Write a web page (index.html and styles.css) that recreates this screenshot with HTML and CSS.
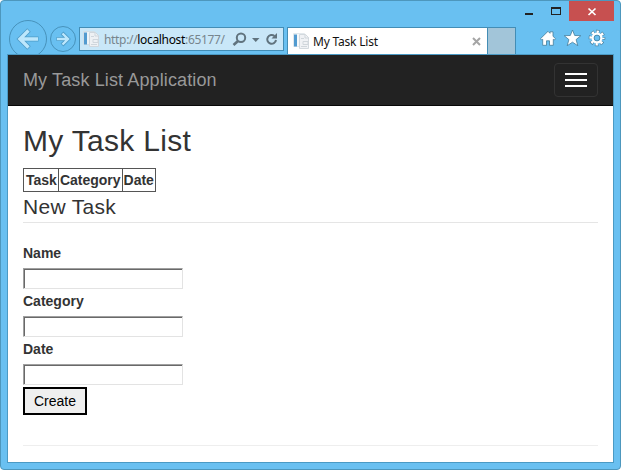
FILE: index.html
```html
<!DOCTYPE html>
<html lang="en">
<head>
<meta charset="utf-8">
<title>My Task List</title>
<link rel="stylesheet" href="styles.css">
</head>
<body>
<div class="window">
  <div class="titlebar">
    <svg class="controls" width="44" height="20" viewBox="525 1 44 20"><path d="M525 13h8v2h-8z" fill="#222"/><path fill="#222" fill-rule="evenodd" d="M551 7h10v8h-10zM552 9v5h8v-5z"/></svg>
    <div class="close"><svg width="45" height="20" viewBox="569 1 45 20"><path d="M588.500 8.500l7 6.500M595.500 8.500l-7 6.500" stroke="#fff" stroke-width="1.700"/></svg></div>
  </div>
  <div class="toolbar">
    <svg class="nav" width="71" height="34" viewBox="8 20 71 34">
      <g fill="none" stroke="#4792bb"><circle cx="28" cy="39" r="18.500"/><circle cx="63" cy="39" r="12.500"/></g>
      <g fill="none" stroke="#4e9cc8" stroke-width="5"><path d="M29 30l-9 9 9 9M20 39h18.500"/></g>
      <g fill="none" stroke="#bde7fc" stroke-width="3.400"><path d="M28.500 30.500l-8.500 8.500 8.500 8.500M20 39h18"/></g>
      <g fill="none" stroke="#4e9cc8" stroke-width="4"><path d="M62 33l6 6-6 6M68 39H56.500"/></g>
      <g fill="none" stroke="#bde7fc" stroke-width="2.400"><path d="M62.500 33.500l5.500 5.500-5.500 5.500M68 39H57"/></g>
    </svg>
    <div class="address">
      <svg class="favicon" width="17" height="17" viewBox="0 0 17 17"><path d="M.5.500h11v13H.500z" fill="#edf4f8" stroke="#d2dfe7"/><path d="M1 1.500h3v12H1z" fill="#529bd0"/><path d="M6.500 1.500h6l3 3v11h-9z" fill="#eef1f4" stroke="#d0d7dd"/><path d="M12 1.500V5h4M8 5.500h3M10 8.500h5v3h-5zM8 13.500h6" fill="none" stroke="#cfd6dc"/></svg>
      <span class="url">http://<b>localhost</b>:65177/</span>
      <svg class="tools" width="50" height="23" viewBox="232 28 50 23"><circle cx="241" cy="37.700" r="4.200" fill="none" stroke="#60737e" stroke-width="2"/><path d="M238 41l-4.500 4" stroke="#60737e" stroke-width="2.600"/><path d="M252 38h7.500l-3.750 4z" fill="#60737e"/><path d="M274.500 36A4.400 4.400 0 1 0 276 40" fill="none" stroke="#60737e" stroke-width="2"/><path d="M277 33v5.500h-5.500z" fill="#60737e"/></svg>
    </div>
    <div class="tab">
      <svg class="favicon" width="17" height="17" viewBox="0 0 17 17"><path d="M.5.500h11v13H.500z" fill="#f7f9fa" stroke="#e2e8ec"/><path d="M1 1.500h3v12H1z" fill="#529bd0"/><path d="M6.500 1.500h6l3 3v11h-9z" fill="#f0f2f5" stroke="#d3d9de"/><path d="M12 1.500V5h4M8 5.500h3M10 8.500h5v3h-5zM8 13.500h6" fill="none" stroke="#d0d6db"/></svg>
      <span class="tab-title">My Task List</span>
      <svg class="tab-close" width="9" height="9" viewBox="0 0 9 9"><path d="M1 1l7 7M8 1L1 8" stroke="#a5a5a5" stroke-width="2"/></svg>
    </div>
    <div class="new-tab"></div>
    <svg class="actions" width="66" height="20" viewBox="540 28 66 20">
      <g fill="#fff" stroke="#447c9b" stroke-width=".8"><path d="M540.500 38.700l7.500-7.400 2 2v-1.500h3v4.500l2.500 2.400-1.200 1.300-1-.7v6h-3.800v-4.500h-3v4.500H542.700v-6l-1 .7z"/><path d="M572.500 30l2.200 5.500 6.100.2-4.700 3.900 1.700 6.100-5.300-3.500-5.300 3.500 1.700-6.100-4.700-3.900 6.100-.2z"/></g>
      <circle cx="597" cy="38" r="6.200" fill="none" stroke="#447c9b" stroke-width="4.200" stroke-dasharray="3.100 1.770" stroke-dashoffset="1.550"/>
      <circle cx="597" cy="38" r="6.200" fill="none" stroke="#fff" stroke-width="2.800" stroke-dasharray="2.300 2.570" stroke-dashoffset="1.150"/>
      <circle cx="597" cy="38" r="4.300" fill="none" stroke="#fff" stroke-width="2.400"/><circle cx="597" cy="38" r="2.900" fill="#69c0f1" stroke="#447c9b" stroke-width=".8"/>
    </svg>
  </div>
  <div class="page">
    <nav class="navbar">
      <span class="brand">My Task List Application</span>
      <div class="toggle"><i></i><i></i><i></i></div>
    </nav>
    <main>
      <h1>My Task List</h1>
      <table><tr><th>Task</th><th>Category</th><th>Date</th></tr></table>
      <h2>New Task</h2>
      <form>
        <label for="name">Name</label><input id="name" type="text">
        <label for="category">Category</label><input id="category" type="text">
        <label for="date">Date</label><input id="date" type="text">
        <button type="button">Create</button>
      </form>
      <hr>
    </main>
  </div>
</div>
</body>
</html>
```
FILE: styles.css
```css
* { box-sizing: border-box; }
body { margin: 0; background: #fff; overflow: hidden; font-family: "Liberation Sans", Arial, sans-serif; }
svg { display: block; flex: none; }
.window { width: 621px; height: 470px; display: flex; flex-direction: column; padding: 0 6px 6px; background: #69c0f1; border: 1px solid #4d97bd; border-radius: 4px; }
.titlebar { height: 20px; flex: none; display: flex; justify-content: flex-end; }
.close { width: 45px; height: 20px; background: #c75050; }
.toolbar { height: 33px; flex: none; display: flex; align-items: flex-start; font: 12px "Noto Sans", "Open Sans", sans-serif; }
.nav { margin: -1px 0 0 1px; }
.address { width: 205px; height: 24px; margin-top: 6px; display: flex; align-items: center; border: 1px solid #438db5; background: #c9e7f8; }
.favicon { margin-left: 3px; }
.url { width: 122px; margin-left: 4px; color: #77858d; white-space: nowrap; letter-spacing: -0.33px; }
.url b { font-weight: normal; color: #000; }
.tools { margin-left: 6px; }
.tab { width: 201px; height: 27px; margin: 6px 0 0 3px; display: flex; align-items: center; background: #fff; border: 1px solid #438db5; border-bottom: 0; }
.tab .favicon { margin-left: 5px; }
.tab-title { margin-left: 3px; color: #111; letter-spacing: -0.2px; }
.tab-close { margin: 0 6px 0 auto; }
.new-tab { width: 28px; height: 27px; margin-top: 6px; background: #a2c5d9; border: solid #438db5; border-width: 1px 1px 0 0; }
.actions { margin: 7px 0 0 24px; }
.page { flex: 1; background: #fff; border: 1px solid #4b9ac4; }
.navbar { height: 51px; padding: 0 15px; display: flex; align-items: center; justify-content: space-between; background: #222; border-bottom: 1px solid #080808; }
.brand { font-size: 18px; line-height: 20px; color: #999; letter-spacing: 0.12px; }
.toggle { width: 44px; height: 34px; padding: 9px 10px; display: flex; flex-direction: column; gap: 4px; border: 1px solid #333; border-radius: 4px; }
.toggle i { flex: none; height: 2px; background: #fff; }
main { padding: 18px 15px 0; color: #333; font-size: 14px; line-height: 20px; }
h1 { margin: 0 0 11px; font-size: 30px; line-height: 33px; font-weight: normal; letter-spacing: 0.3px; }
table { border-collapse: collapse; }
th { height: 23px; padding: 1px; border: 1px solid #555; text-align: left; line-height: 20px; }
th:first-child { padding-left: 2px; }
h2 { height: 31px; margin: 0 0 20px; font-size: 21px; line-height: 30px; font-weight: normal; letter-spacing: 0.3px; border-bottom: 1px solid #e5e5e5; }
form { display: flex; flex-direction: column; align-items: flex-start; }
label { height: 20px; margin-bottom: 5px; font-weight: bold; }
input { width: 160px; height: 21px; margin: 0 0 2px; border: 1px solid; border-color: #a0a0a0 #e3e3e3 #e3e3e3 #a0a0a0; background: #fff; box-shadow: inset 1px 1px #696969; }
button { width: 64px; height: 28px; padding: 0; border: 2px solid #000; background: #efefef; color: #000; font: 14px/20px "Liberation Sans", Arial, sans-serif; }
hr { margin: 30px 0 0; border: 0; border-top: 1px solid #eee; }
```
